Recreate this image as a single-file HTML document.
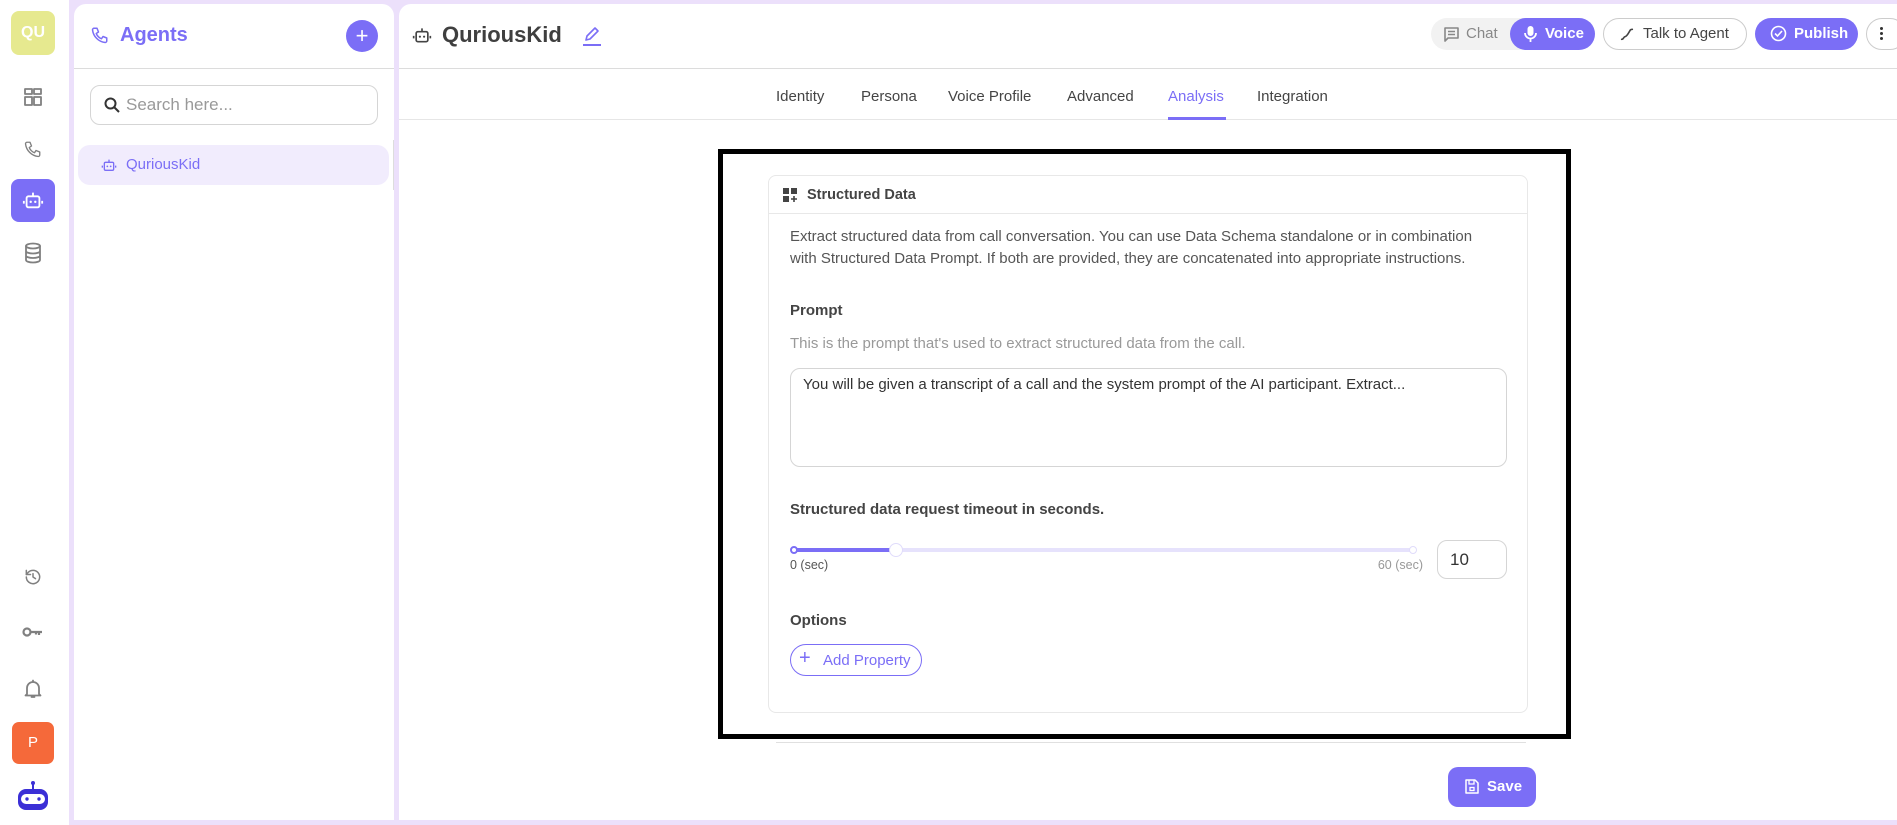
<!DOCTYPE html>
<html><head><meta charset="utf-8"><style>
*{box-sizing:border-box;margin:0;padding:0}
body{width:1897px;height:825px;overflow:hidden;background:#fff;font-family:"Liberation Sans",sans-serif;position:relative;color:#333}
.a{position:absolute}
.ic{stroke:#808080;fill:none;stroke-width:1.8;stroke-linecap:round;stroke-linejoin:round}
</style></head><body>
<div class="a" style="left:69px;top:0;width:1828px;height:825px;background:#ece0fb"></div>
<div class="a" style="left:74px;top:4px;width:320px;height:816px;background:#fff;border-radius:12px 12px 0 0"></div>
<div class="a" style="left:399px;top:4px;width:1498px;height:816px;background:#fff;border-radius:12px 0 0 0"></div>

<div class="a" style="left:11px;top:11px;width:44px;height:44px;background:#e6e98f;border-radius:8px;color:#fff;font-weight:bold;font-size:16px;line-height:44px;text-align:center">QU</div>
<svg class="a" style="left:24px;top:88px" width="18" height="18" viewBox="0 0 18 18"><g class="ic" stroke-width="1.6"><rect x="1" y="1" width="7" height="5"/><rect x="10" y="1" width="7" height="5"/><rect x="1" y="9" width="7" height="8"/><rect x="10" y="9" width="7" height="8"/></g></svg>
<svg class="a" style="left:24px;top:140px" width="18" height="18" viewBox="0 0 24 24"><path class="ic" d="M4 3h4l2 5-3 2c1 3 4 6 7 7l2-3 5 2v4c0 1-1 2-2 2C10 21 3 14 2 5c0-1 1-2 2-2z"/></svg>
<div class="a" style="left:11px;top:179px;width:44px;height:43px;background:#7b6ef6;border-radius:8px"></div>
<svg class="a" style="left:22px;top:189px" width="22" height="22" viewBox="0 0 24 24"><g stroke="#fff" fill="none" stroke-width="2"><rect x="5" y="8" width="14" height="12" rx="2"/><path d="M12 8V4M2 13v3M22 13v3"/></g><circle cx="9.5" cy="14" r="1.3" fill="#fff"/><circle cx="14.5" cy="14" r="1.3" fill="#fff"/></svg>
<svg class="a" style="left:23px;top:242px" width="20" height="22" viewBox="0 0 20 22"><g class="ic" stroke-width="1.5"><ellipse cx="10" cy="4" rx="7" ry="2.5"/><path d="M3 4v14c0 1.4 3 2.5 7 2.5s7-1.1 7-2.5V4M3 9c0 1.4 3 2.5 7 2.5s7-1.1 7-2.5M3 13.5c0 1.4 3 2.5 7 2.5s7-1.1 7-2.5"/></g></svg>
<svg class="a" style="left:23px;top:567px" width="20" height="20" viewBox="0 0 24 24"><g class="ic" stroke-width="2"><path d="M4 12a8 8 0 1 0 2.5-5.8L4 9"/><path d="M4 4v5h5"/><path d="M12 8v4l3 2"/></g></svg>
<svg class="a" style="left:22px;top:625px" width="22" height="14" viewBox="0 0 22 14"><circle cx="5" cy="7" r="3.5" stroke="#808080" stroke-width="2.2" fill="none"/><path d="M8.5 7H20M17 7v3M14 7v2.5" stroke="#808080" stroke-width="2.2" fill="none"/></svg>
<svg class="a" style="left:24px;top:679px" width="18" height="20" viewBox="0 0 18 20"><path class="ic" d="M3 15V9a6 6 0 0 1 12 0v6l1.5 1.5h-15zM9 1.5V3M7.5 18h3"/></svg>
<div class="a" style="left:12px;top:722px;width:42px;height:42px;background:#f5693a;border-radius:7px;color:#fff;font-size:15px;line-height:42px;text-align:center">P</div>
<svg class="a" style="left:17px;top:780px" width="32" height="32" viewBox="0 0 32 32"><circle cx="16" cy="3" r="2" fill="#3b2fd6"/><path d="M16 4v5" stroke="#3b2fd6" stroke-width="2"/><rect x="1" y="9" width="30" height="21" rx="8" fill="#3b2fd6"/><rect x="4" y="14" width="24" height="10" rx="5" fill="#fff"/><circle cx="10" cy="19" r="1.7" fill="#3b2fd6"/><circle cx="22" cy="19" r="1.7" fill="#3b2fd6"/></svg>

<svg class="a" style="left:91px;top:26px" width="18" height="18" viewBox="0 0 24 24"><path d="M4 3h4l2 5-3 2c1 3 4 6 7 7l2-3 5 2v4c0 1-1 2-2 2C10 21 3 14 2 5c0-1 1-2 2-2z" fill="none" stroke="#7b6ef6" stroke-width="2" stroke-linejoin="round"/></svg>
<div class="a" style="left:120px;top:24px;font-size:20px;font-weight:bold;color:#7b6ef6">Agents</div>
<div class="a" style="left:346px;top:20px;width:32px;height:32px;border-radius:50%;background:#7b6ef6;color:#fff;font-size:22px;line-height:31px;text-align:center">+</div>
<div class="a" style="left:74px;top:68px;width:320px;height:1px;background:#dcdcdc"></div>
<div class="a" style="left:90px;top:85px;width:288px;height:40px;border:1px solid #d5d5d5;border-radius:10px"></div>
<svg class="a" style="left:104px;top:97px" width="16" height="16" viewBox="0 0 16 16"><circle cx="6.5" cy="6.5" r="5" stroke="#333" stroke-width="2" fill="none"/><path d="M10 10l5 5" stroke="#333" stroke-width="2"/></svg>
<div class="a" style="left:126px;top:95px;font-size:17px;color:#999">Search here...</div>
<div class="a" style="left:78px;top:145px;width:311px;height:40px;background:#f1ecfd;border-radius:12px"></div>
<svg class="a" style="left:101px;top:157px" width="16" height="16" viewBox="0 0 24 24"><g stroke="#7b6ef6" fill="none" stroke-width="2"><rect x="5" y="8" width="14" height="12" rx="2"/><path d="M12 8V4M2 13v3M22 13v3"/></g><circle cx="9.5" cy="14" r="1.3" fill="#7b6ef6"/><circle cx="14.5" cy="14" r="1.3" fill="#7b6ef6"/></svg>
<div class="a" style="left:126px;top:156px;font-size:15px;color:#7b6ef6">QuriousKid</div>
<div class="a" style="left:393px;top:140px;width:1px;height:50px;background:#ddd"></div>

<svg class="a" style="left:412px;top:25px" width="20" height="20" viewBox="0 0 24 24"><g stroke="#444" fill="none" stroke-width="2"><rect x="5" y="8" width="14" height="12" rx="2"/><path d="M12 8V4M2 13v3M22 13v3"/></g><circle cx="9.5" cy="14" r="1.3" fill="#444"/><circle cx="14.5" cy="14" r="1.3" fill="#444"/></svg>
<div class="a" style="left:442px;top:22px;font-size:22px;font-weight:bold;color:#3f3f3f">QuriousKid</div>
<svg class="a" style="left:582px;top:25px" width="20" height="21" viewBox="0 0 20 21"><path d="M4 15l1-4 8-8 3 3-8 8z" fill="none" stroke="#7b6ef6" stroke-width="1.6" stroke-linejoin="round"/><path d="M1 20h18" stroke="#7b6ef6" stroke-width="2"/></svg>
<div class="a" style="left:1431px;top:18px;width:164px;height:32px;background:#f2f2f2;border-radius:16px"></div>
<svg class="a" style="left:1443px;top:26px" width="17" height="17" viewBox="0 0 17 17"><path d="M2 2h13v10H5l-3 3z" fill="none" stroke="#888" stroke-width="1.6" stroke-linejoin="round"/><path d="M5 5.5h7M5 8.5h7" stroke="#888" stroke-width="1.5"/></svg>
<div class="a" style="left:1466px;top:25px;font-size:15px;color:#888">Chat</div>
<div class="a" style="left:1510px;top:18px;width:85px;height:32px;background:#7b6ef6;border-radius:16px"></div>
<svg class="a" style="left:1524px;top:25px" width="13" height="18" viewBox="0 0 13 18"><rect x="3.5" y="1" width="6" height="10" rx="3" fill="#fff"/><path d="M1 8a5.5 5.5 0 0 0 11 0M6.5 13.5V17" stroke="#fff" stroke-width="1.8" fill="none"/></svg>
<div class="a" style="left:1545px;top:25px;font-size:15px;font-weight:bold;color:#fff">Voice</div>
<div class="a" style="left:1603px;top:18px;width:144px;height:32px;border:1px solid #ccc;border-radius:16px"></div>
<svg class="a" style="left:1619px;top:26px" width="16" height="16" viewBox="0 0 24 24"><path d="M4 20c3 0 3-4 5-4 3 0 6-7 8-10 1-1 2-1 3-1" fill="none" stroke="#444" stroke-width="2.4" stroke-linecap="round"/></svg>
<div class="a" style="left:1643px;top:25px;font-size:15px;color:#444">Talk to Agent</div>
<div class="a" style="left:1755px;top:18px;width:103px;height:32px;background:#7b6ef6;border-radius:16px"></div>
<svg class="a" style="left:1770px;top:25px" width="17" height="17" viewBox="0 0 17 17"><circle cx="8.5" cy="8.5" r="7" fill="none" stroke="#fff" stroke-width="1.6"/><path d="M5 8.5l2.5 2.5 4.5-5" fill="none" stroke="#fff" stroke-width="1.6"/></svg>
<div class="a" style="left:1794px;top:25px;font-size:15px;font-weight:bold;color:#fff">Publish</div>
<div class="a" style="left:1866px;top:18px;width:40px;height:32px;border:1px solid #ccc;border-radius:16px"></div>
<div class="a" style="left:1880px;top:27px;width:3px;height:3px;border-radius:50%;background:#333;box-shadow:0 5px 0 #333,0 10px 0 #333"></div>
<div class="a" style="left:399px;top:68px;width:1498px;height:1px;background:#dcdcdc"></div>
<div class="a" style="left:776px;top:88px;font-size:15px;color:#444">Identity</div>
<div class="a" style="left:861px;top:88px;font-size:15px;color:#444">Persona</div>
<div class="a" style="left:948px;top:88px;font-size:15px;color:#444">Voice Profile</div>
<div class="a" style="left:1067px;top:88px;font-size:15px;color:#444">Advanced</div>
<div class="a" style="left:1168px;top:88px;font-size:15px;color:#7b6ef6">Analysis</div>
<div class="a" style="left:1257px;top:88px;font-size:15px;color:#444">Integration</div>
<div class="a" style="left:399px;top:119px;width:1498px;height:1px;background:#e6e6e6"></div>
<div class="a" style="left:1168px;top:117px;width:58px;height:3px;background:#7b6ef6"></div>

<div class="a" style="left:718px;top:149px;width:853px;height:590px;border:5px solid #000"></div>
<div class="a" style="left:768px;top:175px;width:760px;height:538px;border:1px solid #e8e8e8;border-radius:8px"></div>
<div class="a" style="left:768px;top:213px;width:760px;height:1px;background:#e8e8e8"></div>
<svg class="a" style="left:783px;top:188px" width="14" height="14" viewBox="0 0 14 14"><rect x="0" y="0" width="6" height="6" fill="#444"/><rect x="8" y="0" width="6" height="6" fill="#444"/><rect x="0" y="8" width="6" height="6" fill="#444"/><path d="M11 8v6M8 11h6" stroke="#444" stroke-width="1.6"/></svg>
<div class="a" style="left:807px;top:187px;font-size:14.5px;font-weight:bold;color:#444">Structured Data</div>
<div class="a" style="left:790px;top:226px;width:705px;font-size:15px;line-height:22px;color:#555">Extract structured data from call conversation. You can use Data Schema standalone or in combination with Structured Data Prompt. If both are provided, they are concatenated into appropriate instructions.</div>
<div class="a" style="left:790px;top:302px;font-size:15px;font-weight:bold;color:#444">Prompt</div>
<div class="a" style="left:790px;top:335px;font-size:15px;color:#999">This is the prompt that's used to extract structured data from the call.</div>
<div class="a" style="left:790px;top:368px;width:717px;height:99px;border:1px solid #d5d5d5;border-radius:10px"></div>
<div class="a" style="left:803px;top:376px;font-size:15px;color:#333">You will be given a transcript of a call and the system prompt of the AI participant. Extract...</div>
<div class="a" style="left:790px;top:501px;font-size:15px;font-weight:bold;color:#444">Structured data request timeout in seconds.</div>
<div class="a" style="left:794px;top:548px;width:619px;height:4px;background:#e6e2fc;border-radius:2px"></div>
<div class="a" style="left:794px;top:548px;width:102px;height:4px;background:#7b6ef6"></div>
<div class="a" style="left:790px;top:546px;width:8px;height:8px;border-radius:50%;background:#fff;border:2px solid #7b6ef6"></div>
<div class="a" style="left:889px;top:543px;width:14px;height:14px;border-radius:50%;background:#fff;border:1.5px solid #e0dcfb"></div>
<div class="a" style="left:1409px;top:546px;width:8px;height:8px;border-radius:50%;background:#fff;border:1px solid #e0dcfb"></div>
<div class="a" style="left:790px;top:558px;font-size:12.5px;color:#555">0 (sec)</div>
<div class="a" style="left:1423px;top:558px;font-size:12.5px;color:#999;transform:translateX(-100%)">60 (sec)</div>
<div class="a" style="left:1437px;top:540px;width:70px;height:39px;border:1px solid #d5d5d5;border-radius:10px;font-size:17px;color:#333;padding:9px 0 0 12px">10</div>
<div class="a" style="left:790px;top:612px;font-size:15px;font-weight:bold;color:#444">Options</div>
<div class="a" style="left:790px;top:644px;width:132px;height:32px;border:1px solid #7b6ef6;border-radius:16px"></div>
<div class="a" style="left:799px;top:647px;font-size:20px;color:#7b6ef6">+</div>
<div class="a" style="left:823px;top:652px;font-size:15px;color:#7b6ef6">Add Property</div>
<div class="a" style="left:776px;top:742px;width:750px;height:1px;background:#e0e0e0"></div>
<div class="a" style="left:1448px;top:767px;width:88px;height:40px;background:#7b6ef6;border-radius:10px"></div>
<svg class="a" style="left:1465px;top:779px" width="14" height="15" viewBox="0 0 14 15"><path d="M1 1h9l3 3v10H1z" fill="none" stroke="#fff" stroke-width="1.5" stroke-linejoin="round"/><path d="M4 1v4h5V1" fill="none" stroke="#fff" stroke-width="1.3"/><rect x="5" y="8.5" width="4" height="3" fill="none" stroke="#fff" stroke-width="1.3"/></svg>
<div class="a" style="left:1487px;top:778px;font-size:15px;font-weight:bold;color:#fff">Save</div>
</body></html>
